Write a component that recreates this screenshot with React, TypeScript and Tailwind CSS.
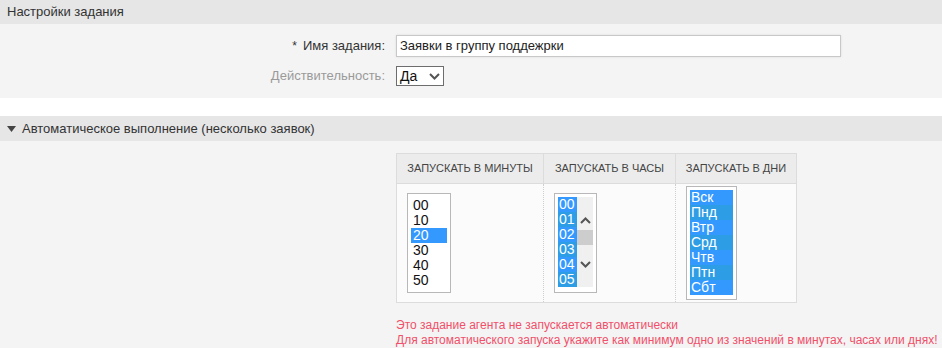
import React from 'react';

const minutes = ['00', '10', '20', '30', '40', '50'];
const hours = ['00', '01', '02', '03', '04', '05'];
const days = ['Вск', 'Пнд', 'Втр', 'Срд', 'Чтв', 'Птн', 'Сбт'];

const Chevron = ({ up = false, className = '' }: { up?: boolean; className?: string }) => (
  <svg width="11" height="7" viewBox="0 0 11 7" className={className}>
    <path
      d={up ? 'M1 6 L5.5 1.5 L10 6' : 'M1 1 L5.5 5.5 L10 1'}
      fill="none"
      stroke="#555"
      strokeWidth="2"
    />
  </svg>
);

const SectionHeader = ({ children }: { children: React.ReactNode }) => (
  <div className="flex h-[25px] items-center bg-[#e6e6e6] px-[7px] text-[13px] text-[#333]">{children}</div>
);

const App = () => {
  return (
    <div className="h-[348px] w-[942px] overflow-hidden bg-white font-['Liberation_Sans',Arial,sans-serif]">
      <div className="flex h-[24px] items-center bg-[#e6e6e6] px-[7px] text-[13px] text-[#333]">
        Настройки задания
      </div>

      <div className="flex flex-col gap-[9px] bg-[#f4f4f4] pb-[12px] pt-[11px] text-[13px]">
        <div className="flex items-center">
          <label className="w-[385px] text-right text-[#333]">
            <span className="mr-[6px] text-[12px]">*</span>Имя задания:
          </label>
          <div className="ml-[11px] flex h-[22px] w-[445px] items-center border border-[#c8c8c8] bg-white px-[3px] text-[#222] shadow-[0_0_2px_#ddd]">
            Заявки в группу поддежрки
          </div>
        </div>
        <div className="flex items-center">
          <label className="w-[385px] text-right text-[#9a9a9a]">Действительность:</label>
          <div className="ml-[11px] flex h-[20px] w-[48px] items-center justify-between border border-[#6d6d6d] bg-white pl-[3px] pr-[3px] text-[#111]">
            <span className="text-[14px]">Да</span>
            <Chevron />
          </div>
        </div>
      </div>

      <div className="h-[18px] bg-white" />

      <SectionHeader>
        <svg width="9" height="6" viewBox="0 0 9 6" className="mr-[6px]">
          <path d="M0 0 L9 0 L4.5 6 Z" fill="#444" />
        </svg>
        Автоматическое выполнение (несколько заявок)
      </SectionHeader>

      <div className="h-[207px] bg-[#f4f4f4] pl-[396px] pt-[12px] text-[13px]">
        <div className="w-[401px] border border-[#dcdcdc] bg-[#fbfbfb]">
          <div className="flex h-[29px] bg-[#ececec] text-[11px] text-[#444]">
            <div className="flex w-[147px] items-center justify-center border-r border-[#dcdcdc]">ЗАПУСКАТЬ В МИНУТЫ</div>
            <div className="flex w-[132px] items-center justify-center border-r border-[#dcdcdc]">ЗАПУСКАТЬ В ЧАСЫ</div>
            <div className="flex flex-1 items-center justify-center">ЗАПУСКАТЬ В ДНИ</div>
          </div>
          <div className="flex h-[119px] border-t border-[#dcdcdc] text-[14px]">
            <div className="flex w-[147px] items-center border-r border-dotted border-[#cfcfcf] pl-[10px]">
              <div className="h-[100px] w-[44px] border border-[#b8b8b8] bg-white px-[3px] pt-[4px]">
                {minutes.map((m) => (
                  <div
                    key={m}
                    className={`h-[15px] px-[2px] leading-[15px] ${m === '20' ? 'bg-[#3399ff] text-white' : 'text-[#111]'}`}
                  >
                    {m}
                  </div>
                ))}
              </div>
            </div>
            <div className="flex w-[132px] items-center border-r border-dotted border-[#cfcfcf] pl-[10px]">
              <div className="flex h-[100px] w-[43px] border border-[#b8b8b8] bg-white pl-[3px] pt-[3px]">
                <div className="w-[19px]">
                  {hours.map((h, i) => (
                    <div
                      key={h}
                      className={`h-[15px] px-[1px] leading-[15px] text-white ${i % 2 === 0 ? 'bg-[#3399ff]' : 'bg-[#2d9de6]'}`}
                    >
                      {h}
                    </div>
                  ))}
                </div>
                <div className="flex h-[90px] w-[16px] flex-col items-center bg-[#f0f0f0] pt-[20px]">
                  <Chevron up />
                  <div className="mt-[6px] h-[15px] w-[16px] bg-[#cdcdcd]" />
                  <Chevron className="mt-[16px]" />
                </div>
              </div>
            </div>
            <div className="flex flex-1 items-center pl-[10px]">
              <div className="h-[114px] w-[51px] border border-[#b8b8b8] bg-white px-[3px] pt-[3px]">
                {days.map((d, i) => (
                  <div
                    key={d}
                    className={`h-[15px] px-[1px] leading-[15px] text-white ${i % 2 === 0 ? 'bg-[#3399ff]' : 'bg-[#2d9de6]'}`}
                  >
                    {d}
                  </div>
                ))}
              </div>
            </div>
          </div>
        </div>

        <div className="mt-[15px] text-[12px] leading-[15px] text-[#f0506a]">
          <div>Это задание агента не запускается автоматически</div>
          <div className="whitespace-nowrap">Для автоматического запуска укажите как минимум одно из значений в минутах, часах или днях!</div>
        </div>
      </div>
    </div>
  );
};

export default App;
